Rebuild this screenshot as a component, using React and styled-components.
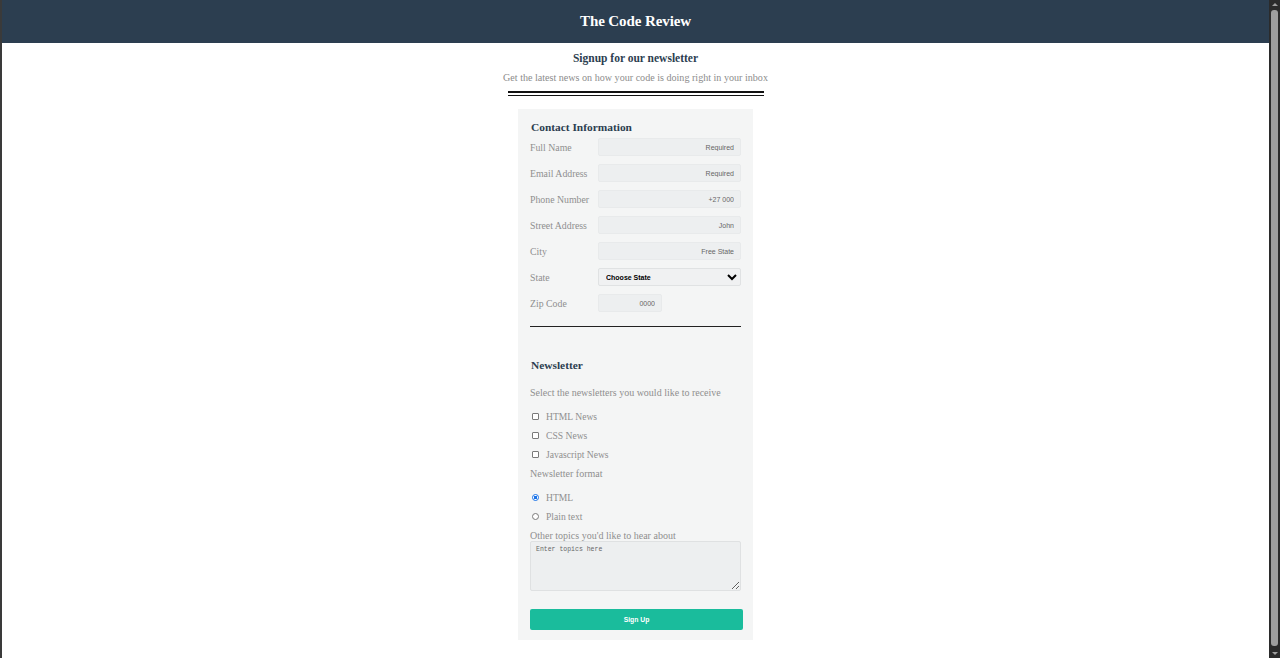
import styled, { createGlobalStyle } from "styled-components";

const GlobalStyle = createGlobalStyle`
  html {
    background: #ffffff;
  }
  body {
    margin: 0;
    font-family: "Liberation Serif", "DejaVu Serif", serif;
    color: #888;
  }
`;

const fields = [
  { label: "Full Name", placeholder: "Required" },
  { label: "Email Address", placeholder: "Required" },
  { label: "Phone Number", placeholder: "+27 000" },
  { label: "Street Address", placeholder: "John" },
  { label: "City", placeholder: "Free State" },
];

const newsletters = ["HTML News", "CSS News", "Javascript News"];

export default function App() {
  return (
    <Page>
      <GlobalStyle />
      <Header>
        <Brand>The Code Review</Brand>
      </Header>

      <Main>
        <Title>Signup for our newsletter</Title>
        <Subtitle>Get the latest news on how your code is doing right in your inbox</Subtitle>
        <DoubleRule />

        <Card>
          <SectionTitle>Contact Information</SectionTitle>
          <Fields>
            {fields.map((f) => (
              <Row key={f.label}>
                <Label>{f.label}</Label>
                <Input placeholder={f.placeholder} />
              </Row>
            ))}
            <Row>
              <Label>State</Label>
              <Select defaultValue="">
                <option value="">Choose State</option>
              </Select>
            </Row>
            <Row>
              <Label>Zip Code</Label>
              <Input placeholder="0000" $narrow />
            </Row>
          </Fields>

          <Divider />

          <SectionTitle $spaced>Newsletter</SectionTitle>
          <Hint>Select the newsletters you would like to receive</Hint>
          <OptionList>
            {newsletters.map((n) => (
              <OptionRow key={n}>
                <CheckBox type="checkbox" />
                <OptionText>{n}</OptionText>
              </OptionRow>
            ))}
            <OptionRow>
              <Hint as="span">Newsletter format</Hint>
            </OptionRow>
          </OptionList>
          <OptionList $top>
            <OptionRow>
              <Radio type="radio" name="format" defaultChecked />
              <OptionText>HTML</OptionText>
            </OptionRow>
            <OptionRow>
              <Radio type="radio" name="format" />
              <OptionText>Plain text</OptionText>
            </OptionRow>
            <OptionRow>
              <Hint as="span">Other topics you'd like to hear about</Hint>
            </OptionRow>
          </OptionList>
          <TextArea placeholder="Enter topics here" />
          <Button type="button">Sign Up</Button>
        </Card>
      </Main>

      <ScrollTrack>
        <ScrollArrow $up />
        <ScrollThumb />
        <ScrollArrow />
      </ScrollTrack>
    </Page>
  );
}

const Page = styled.div`
  border-left: 2px solid #3a3a3a;
  margin-right: 11px;
  min-height: 658px;
  box-sizing: border-box;
`;

const ScrollTrack = styled.div`
  position: fixed;
  top: 0;
  right: 0;
  width: 11px;
  height: 658px;
  background: #2b2b2b;
  display: flex;
  flex-direction: column;
  align-items: center;
`;

const ScrollThumb = styled.div`
  flex: 1;
  width: 7px;
  margin: 1px 0 3px;
  border-radius: 3px;
  background: #9e9e9e;
`;

const ScrollArrow = styled.div`
  flex: none;
  width: 0;
  height: 0;
  margin: 3px 0;
  border-left: 3px solid transparent;
  border-right: 3px solid transparent;
  ${({ $up }) =>
    $up ? "border-bottom: 3px solid #9e9e9e;" : "border-top: 3px solid #9e9e9e;"}
`;

const Header = styled.header`
  height: 43px;
  background: #2c3e50;
  display: flex;
  align-items: center;
  justify-content: center;
`;

const Brand = styled.h1`
  margin: 0;
  color: #ffffff;
  font-size: 15px;
  font-weight: 700;
  letter-spacing: -0.1px;
`;

const Main = styled.main`
  display: flex;
  flex-direction: column;
  align-items: center;
`;

const Title = styled.h2`
  margin: 8px 0 0;
  font-size: 11.5px;
  line-height: 14px;
  color: #2c3e50;
  font-weight: 700;
`;

const Subtitle = styled.p`
  margin: 7px 0 0;
  font-size: 10.1px;
  line-height: 12px;
  color: #8c8c8c;
`;

const DoubleRule = styled.div`
  width: 256px;
  height: 2px;
  margin-top: 7px;
  border-top: 2px solid #111;
  border-bottom: 1px solid #111;
`;

const Card = styled.section`
  width: 211px;
  margin: 13px 0 12px;
  padding: 10px 12px 10px;
  background: #f4f5f5;
  display: flex;
  flex-direction: column;
`;

const SectionTitle = styled.h3`
  margin: ${({ $spaced }) => ($spaced ? "31px 0 0" : "1px 0 0")};
  padding-left: 1px;
  font-size: 11.4px;
  line-height: 14px;
  color: #2c3e50;
  font-weight: 700;
`;

const Fields = styled.div`
  display: flex;
  flex-direction: column;
  gap: 8px;
  margin-top: 4px;
`;

const Row = styled.div`
  display: flex;
  align-items: center;
  height: 18px;
`;

const Label = styled.label`
  width: 68px;
  flex: none;
  font-size: 9.8px;
  color: #8f8f8f;
`;

const Input = styled.input`
  box-sizing: border-box;
  width: ${({ $narrow }) => ($narrow ? "64px" : "143px")};
  height: 18px;
  padding: 0 6px;
  border: 1px solid #e8eaeb;
  border-radius: 2px;
  background: #edeff0;
  text-align: right;
  font-family: "Liberation Sans", Arial, sans-serif;
  font-size: 7px;
  outline: none;

  &::placeholder {
    color: #666;
  }
`;

const Select = styled.select`
  box-sizing: border-box;
  width: 143px;
  height: 18px;
  padding: 0 3px;
  border: 1px solid #e0e2e3;
  border-radius: 2px;
  background: #f0f1f2;
  color: #000;
  font-family: "Liberation Sans", Arial, sans-serif;
  font-size: 7px;
  font-weight: 700;
`;

const Divider = styled.hr`
  margin: 14px 0 0;
  border: none;
  border-top: 1px solid #222;
  width: 100%;
`;

const Hint = styled.p`
  margin: 15px 0 0;
  font-size: 10px;
  line-height: 12px;
  color: #8f8f8f;

  span& {
    margin: 0;
  }
`;

const OptionList = styled.div`
  display: flex;
  flex-direction: column;
  margin-top: ${({ $top }) => ($top ? "5px" : "8px")};
`;

const OptionRow = styled.div`
  display: flex;
  align-items: center;
  height: 19px;
  gap: 7px;
`;

const CheckBox = styled.input`
  appearance: none;
  box-sizing: border-box;
  width: 7px;
  height: 7px;
  margin: 0 0 0 2px;
  border: 1px solid #7a7a7a;
  border-radius: 1px;
  background: #fff;
`;

const Radio = styled.input`
  appearance: none;
  box-sizing: border-box;
  width: 7px;
  height: 7px;
  margin: 0 0 0 2px;
  border: 1px solid #7a7a7a;
  border-radius: 50%;
  background: #fff;

  &:checked {
    border-color: #1a73e8;
    background: radial-gradient(circle, #1a73e8 0 40%, #fff 50%);
  }
`;

const OptionText = styled.span`
  font-size: 9.6px;
  color: #8f8f8f;
`;

const TextArea = styled.textarea`
  box-sizing: border-box;
  width: 211px;
  height: 50px;
  margin-top: -4px;
  padding: 4px 5px;
  border: 1px solid #dfe1e2;
  border-radius: 2px;
  background: #edeff0;
  font-family: "Liberation Mono", "DejaVu Sans Mono", monospace;
  font-size: 6.5px;
  resize: vertical;

  &::placeholder {
    color: #666;
  }
`;

const Button = styled.button`
  margin-top: 18px;
  width: 213px;
  height: 21px;
  border: none;
  border-radius: 2px;
  background: #1abc9c;
  color: #ffffff;
  font-family: "Liberation Sans", Arial, sans-serif;
  font-size: 6.8px;
  font-weight: 700;
  cursor: pointer;
`;
